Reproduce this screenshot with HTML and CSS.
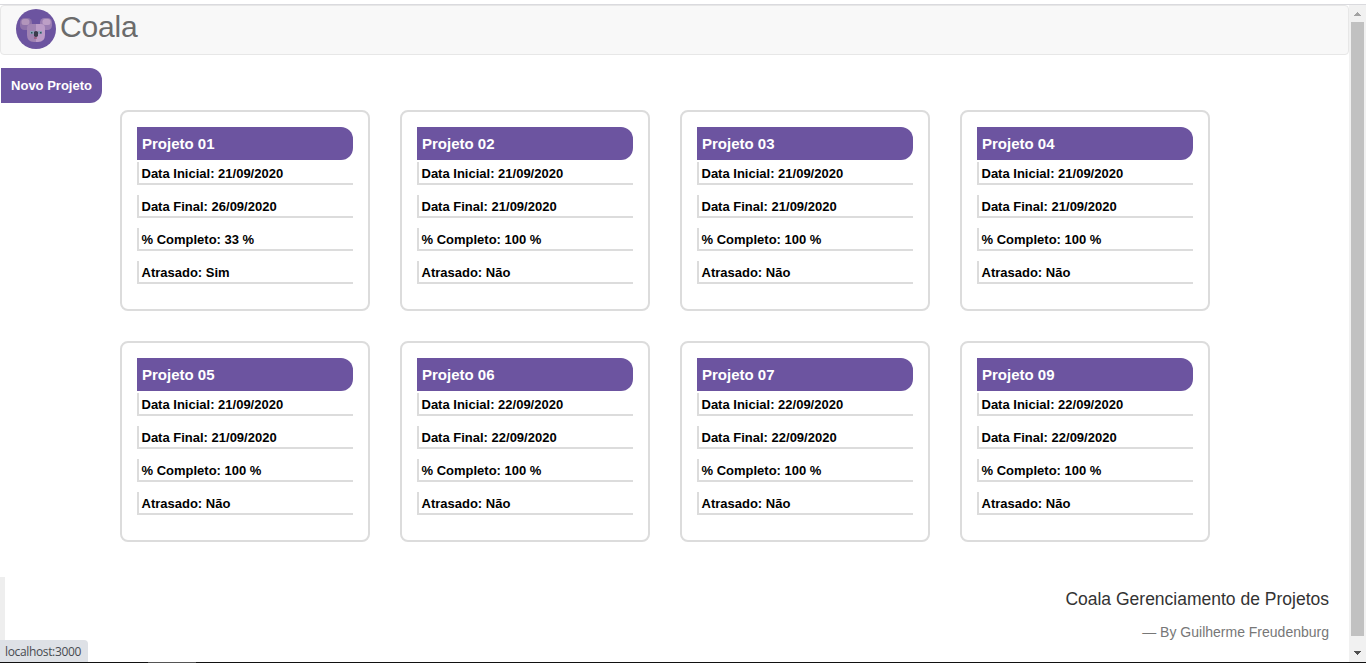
FILE: index.html
```html
<!DOCTYPE html>
<html lang="pt-BR">
<head>
<meta charset="utf-8">
<title>Coala</title>
<link rel="stylesheet" href="styles.css">
</head>
<body>
<div class="window">
  <div class="view">
    <main class="page">
      <nav class="navbar">
        <svg class="logo" width="40" height="40" viewBox="0 0 40 40">
          <circle cx="20" cy="20" r="20" fill="#6c54a0"/>
          <rect x="4" y="9" width="12" height="12" rx="4.5" fill="#8d71a8"/>
          <rect x="24" y="9" width="12" height="12" rx="4.5" fill="#9a7db2"/>
          <rect x="5.5" y="10" width="8" height="6" rx="2.5" fill="#b295bb"/>
          <rect x="26.5" y="10" width="8" height="6" rx="2.5" fill="#bd9fc6"/>
          <path d="M20 15h-5q-4 0-4 4v7q0 7 7 7h2z" fill="#a184b3"/>
          <path d="M20 15h5q4 0 4 4v7q0 7-7 7h-2z" fill="#bb9cc7"/>
          <path d="M14 22h4v3h-4zM22 22h4v3h-4z" fill="#8c9eb9"/>
          <path d="M15 23h1.5v1.5H15zM24 23h1.5v1.5H24z" fill="#31545f"/>
          <path d="M18 23q2-2 4 0v4q-2 2-4 0z" fill="#3a3c4c"/>
          <path d="M18 28.5h3v1h-3z" fill="#9a405f"/>
        </svg>
        <span class="brand">Coala</span>
      </nav>
      <button class="new">Novo Projeto</button>
      <section class="grid">
        <article class="card"><h2>Projeto 01</h2><p>Data Inicial: 21/09/2020</p><p>Data Final: 26/09/2020</p><p>% Completo: 33 %</p><p>Atrasado: Sim</p></article>
        <article class="card"><h2>Projeto 02</h2><p>Data Inicial: 21/09/2020</p><p>Data Final: 21/09/2020</p><p>% Completo: 100 %</p><p>Atrasado: Não</p></article>
        <article class="card"><h2>Projeto 03</h2><p>Data Inicial: 21/09/2020</p><p>Data Final: 21/09/2020</p><p>% Completo: 100 %</p><p>Atrasado: Não</p></article>
        <article class="card"><h2>Projeto 04</h2><p>Data Inicial: 21/09/2020</p><p>Data Final: 21/09/2020</p><p>% Completo: 100 %</p><p>Atrasado: Não</p></article>
        <article class="card"><h2>Projeto 05</h2><p>Data Inicial: 21/09/2020</p><p>Data Final: 21/09/2020</p><p>% Completo: 100 %</p><p>Atrasado: Não</p></article>
        <article class="card"><h2>Projeto 06</h2><p>Data Inicial: 22/09/2020</p><p>Data Final: 22/09/2020</p><p>% Completo: 100 %</p><p>Atrasado: Não</p></article>
        <article class="card"><h2>Projeto 07</h2><p>Data Inicial: 22/09/2020</p><p>Data Final: 22/09/2020</p><p>% Completo: 100 %</p><p>Atrasado: Não</p></article>
        <article class="card"><h2>Projeto 09</h2><p>Data Inicial: 22/09/2020</p><p>Data Final: 22/09/2020</p><p>% Completo: 100 %</p><p>Atrasado: Não</p></article>
      </section>
      <blockquote class="credit">
        <p>Coala Gerenciamento de Projetos</p>
        <footer>— By Guilherme Freudenburg</footer>
      </blockquote>
    </main>
    <div class="scrollbar">
      <svg width="17" height="17" viewBox="0 0 17 17" shape-rendering="crispEdges"><path d="M8 7h1v1h1v1h1v1h1v1H5v-1h1V9h1V8h1z" fill="#a3a3a3"/></svg>
      <div class="thumb"></div>
      <svg width="17" height="17" viewBox="0 0 17 17" shape-rendering="crispEdges"><path d="M5 6h7v1h-1v1h-1v1H9v1H8V9H7V8H6V7H5z" fill="#505050"/></svg>
    </div>
  </div>
  <div class="taskbar"><div class="task"></div></div>
  <div class="status">localhost:3000</div>
</div>
</body>
</html>
```
FILE: styles.css
```css
* { box-sizing: border-box; }
body {
  margin: 0;
  background: #fff;
  font-family: "Liberation Sans", Arial, sans-serif;
  font-size: 14px;
  line-height: 20px;
  color: #333;
}
.window {
  position: relative;
  display: flex;
  flex-direction: column;
  height: 663px;
  padding-top: 4px;
  overflow: hidden;
}
.view {
  display: flex;
  flex: 1;
  min-height: 0;
  border-top: 1px solid #dadade;
}
.page { flex: 1; min-width: 0; }
.navbar {
  display: flex;
  align-items: flex-start;
  height: 50px;
  padding: 3px 15px 0;
  border: 1px solid #e7e7e7;
  border-radius: 4px;
  background: #f8f8f8;
}
.logo { flex: none; }
.brand {
  margin-left: 4px;
  font-size: 30px;
  letter-spacing: -0.2px;
  line-height: 35px;
  color: #6b6b6b;
}
.new {
  display: block;
  width: 101px;
  height: 35px;
  margin: 13px 0 0 1px;
  padding: 1px 0 0;
  border: 0;
  border-radius: 0 12px 12px 0;
  background: #6c54a0;
  color: #fff;
  font: bold 13px/20px "Liberation Sans", Arial, sans-serif;
}
.grid {
  display: grid;
  grid-template-columns: repeat(4, 250px);
  grid-auto-rows: 201px;
  gap: 30px;
  margin: 7px 0 0 120px;
}
.card {
  padding: 15px;
  border: 2px solid #dcdcdc;
  border-radius: 8px;
}
.card h2 {
  width: 216px;
  height: 33px;
  margin: 0 0 2px;
  padding-left: 5px;
  border-radius: 0 12px 12px 0;
  background: #6c54a0;
  color: #fff;
  font-size: 15px;
  line-height: 33px;
}
.card p {
  height: 23px;
  margin: 0 0 10px;
  padding-left: 2.5px;
  border-left: 2px solid #dcdcdc;
  border-bottom: 2px solid #dcdcdc;
  color: #000;
  font-size: 13px;
  font-weight: bold;
  line-height: 24px;
}
.credit {
  height: 80px;
  margin: 35px 0 0;
  padding: 10px 20px 0 0;
  border-left: 5px solid #eee;
  text-align: right;
}
.credit p {
  margin: 0 0 10px;
  font-size: 17.5px;
  line-height: 25px;
}
.credit footer { color: #777; line-height: 20px; }
.scrollbar {
  display: flex;
  flex-direction: column;
  width: 17px;
  background: #f1f1f1;
}
.thumb { flex: 1; margin: 0 2px 9px; background: #c1c1c1; }
.scrollbar svg { flex: none; }
.taskbar { height: 1px; background: #111; }
.task { width: 48px; height: 1px; margin-left: 148px; background: #555; }
.status {
  position: absolute;
  left: 0;
  bottom: 1px;
  width: 88px;
  height: 22px;
  padding-left: 5px;
  border-radius: 0 4px 0 0;
  background: #dee1e6;
  color: #484b50;
  font: 12px/24px "Open Sans", "Noto Sans", sans-serif;
  letter-spacing: -0.35px;
}
```
